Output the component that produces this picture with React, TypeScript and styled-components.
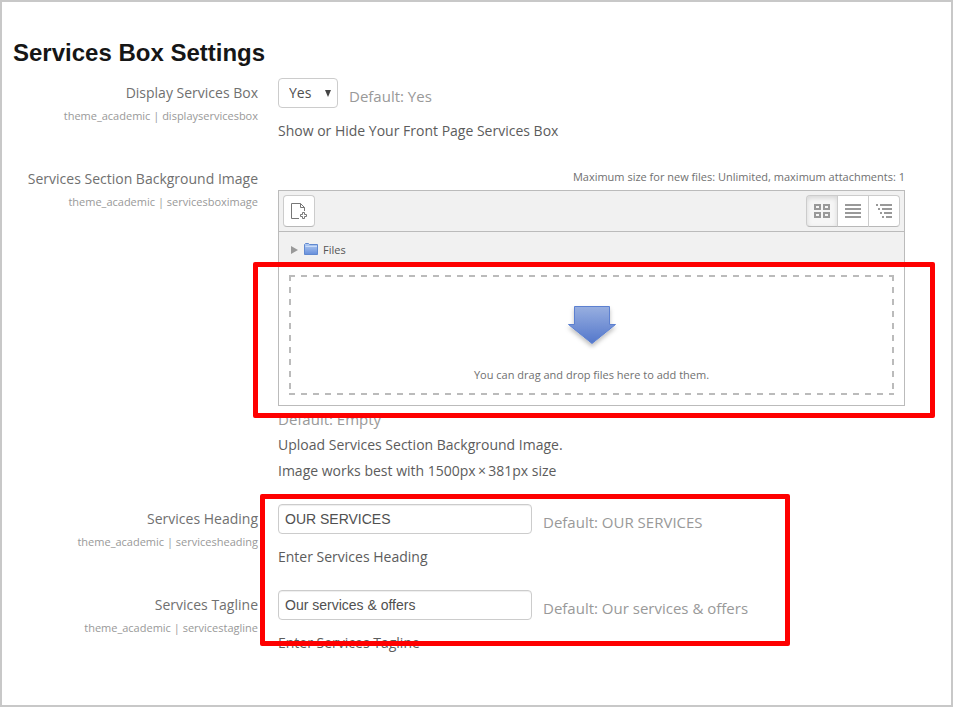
import React from "react";
import styled, { createGlobalStyle, css } from "styled-components";

const GlobalStyle = createGlobalStyle`
  *, *::before, *::after { box-sizing: border-box; }
  body {
    margin: 0;
    background: #fff;
    color: #5c5c5c;
    font-family: "Open Sans", sans-serif;
    font-size: 14px;
    line-height: 26px;
  }
`;

const Page = styled.main`
  min-height: 100vh;
  padding: 34px 46px 20px 11px;
  border: 2px solid #c8c8c8;
`;

const Title = styled.h1`
  margin: 0 0 8px;
  color: #161616;
  font: bold 24px/34px "Liberation Sans", Arial, sans-serif;
`;

const Row = styled.div`
  display: grid;
  grid-template-columns: 245px minmax(0, 1fr);
  column-gap: 20px;
  margin-bottom: 20px;
`;

const LabelCell = styled.div`
  padding-top: 2px;
  text-align: right;
  color: #707070;
`;

const Label = styled.label`
  display: block;
`;

const SettingName = styled.span`
  display: block;
  color: #999;
  font-size: 11px;
  line-height: 20px;
`;

const ControlLine = styled.div`
  display: flex;
  gap: 11px;
  height: 30px;
  margin-bottom: 10px;
`;

const DefaultValue = styled.span<{ $beside?: boolean }>`
  display: block;
  color: #999;
  font-size: 15px;
  ${(p) => p.$beside && css`padding-top: 5px;`}
`;

const Help = styled.p`
  margin: 0;
`;

const SelectBox = styled.span`
  position: relative;
  width: 60px;
  svg {
    position: absolute;
    top: 12px;
    right: 6px;
    pointer-events: none;
  }
`;

const Select = styled.select`
  width: 100%;
  height: 30px;
  padding: 0 10px 2px;
  appearance: none;
  border: 1px solid #ccc;
  border-radius: 4px;
  background: #fff;
  color: #505050;
  font: 14px "Open Sans", sans-serif;
`;

const TextInput = styled.input`
  width: 254px;
  height: 30px;
  padding: 0 6px;
  border: 1px solid #ccc;
  border-radius: 4px;
  box-shadow: inset 0 1px 1px rgba(0, 0, 0, 0.07);
  color: #505050;
  font: 14px "Liberation Sans", Arial, sans-serif;
`;

const Limits = styled.p`
  margin: 0;
  text-align: right;
  color: #707070;
  font-size: 11px;
`;

const Highlighted = styled.div`
  position: relative;
`;

const Highlight = styled.div<{ $area: "drop" | "text" }>`
  position: absolute;
  z-index: 1;
  border: 5px solid #fe0000;
  border-radius: 2px;
  pointer-events: none;
  ${(p) =>
    p.$area === "drop"
      ? css`top: 72px; right: -30px; bottom: -12px; left: -25px;`
      : css`top: -10px; bottom: 10px; left: 247px; width: 530px;`}
`;

const FileManager = styled.section`
  border: 1px solid #bbb;
`;

const Toolbar = styled.div`
  display: flex;
  justify-content: space-between;
  padding: 4px;
  border-bottom: 1px solid #bbb;
  background: #f1f1f1;
`;

const ToolButton = styled.button<{ $active?: boolean }>`
  display: flex;
  align-items: center;
  justify-content: center;
  width: 32px;
  height: 32px;
  padding: 0;
  border: 1px solid #ccc;
  border-bottom-color: #b8b8b8;
  border-radius: 4px;
  background: #fff;
  ${(p) => p.$active && css`
    background: #f6f6f6;
    box-shadow: inset 0 2px 5px rgba(0, 0, 0, 0.13);
  `}
`;

const ViewButtons = styled.div`
  display: flex;
  ${ToolButton} + ${ToolButton} { margin-left: -1px; }
  ${ToolButton}:not(:last-child) { border-top-right-radius: 0; border-bottom-right-radius: 0; }
  ${ToolButton}:not(:first-child) { border-top-left-radius: 0; border-bottom-left-radius: 0; }
`;

const PathBar = styled.nav`
  display: flex;
  align-items: center;
  gap: 5px;
  height: 33px;
  padding: 2px 12px 0;
  background: #f1f1f1;
`;

const FolderLink = styled.a`
  display: flex;
  align-items: center;
  gap: 4px;
  color: #555;
  font-size: 11px;
  line-height: 20px;
  text-decoration: none;
`;

const DropArea = styled.div`
  --h: repeating-linear-gradient(90deg, #bbb 0 6px, transparent 6px 12px);
  --v: repeating-linear-gradient(180deg, #bbb 0 6px, transparent 6px 12px);
  display: flex;
  flex-direction: column;
  align-items: center;
  height: 120px;
  margin: 10px;
  padding-top: 27px;
  background:
    var(--h) top / 100% 2px no-repeat,
    var(--h) bottom / 100% 2px no-repeat,
    var(--v) left / 2px 100% no-repeat,
    var(--v) right / 2px 100% no-repeat;
  color: #707070;
  font-size: 11px;
  line-height: 20px;
`;

const DropText = styled.p`
  margin: 15px 0 0;
`;

function AddFileIcon() {
  return (
    <svg width="18" height="18" viewBox="0 0 18 18" fill="none" stroke="#777" aria-hidden="true">
      <path d="M9 16.5H1.5V1.5H10.500L14.500 5.500V9" />
      <path d="M10.500 1.500V5.500H14.500" />
      <path d="M12.500 10.500H14.500V12.500H16.500V14.500H14.500V16.500H12.500V14.500H10.500V12.500H12.500Z" fill="#fff" />
    </svg>
  );
}

function GridIcon() {
  return (
    <svg width="16" height="14" viewBox="0 0 16 14" fill="none" stroke="#999" strokeWidth="2" aria-hidden="true">
      <path d="M1 1H6V5H1ZM10 1H15V5H10ZM1 9H6V13H1ZM10 9H15V13H10Z" />
    </svg>
  );
}

function ListIcon() {
  return (
    <svg width="16" height="14" viewBox="0 0 16 14" stroke="#999" strokeWidth="2" aria-hidden="true">
      <path d="M0 1H16M0 5H16M0 9H16M0 13H16" />
    </svg>
  );
}

function TreeIcon() {
  return (
    <svg width="16" height="14" viewBox="0 0 16 14" stroke="#999" strokeWidth="2" aria-hidden="true">
      <path d="M0 1H2M4 1H16M2 5H4M6 5H16M4 9H6M8 9H16M6 13H8M10 13H16" />
    </svg>
  );
}

function FolderIcon() {
  return (
    <svg width="15" height="13" viewBox="0 0 15 13" aria-hidden="true">
      <defs>
        <linearGradient id="folder" x2="0" y2="1">
          <stop stopColor="#b4cdf3" />
          <stop offset="1" stopColor="#668edb" />
        </linearGradient>
      </defs>
      <path d="M.5 1.500L1.500 .5H4.500L5.500 1.500H13.500V11.500H.5Z" fill="url(#folder)" stroke="#6189d0" />
      <path d="M1.500 3.500H13" stroke="#c8dbf8" />
    </svg>
  );
}

function DropArrow() {
  return (
    <svg width="56" height="48" viewBox="0 0 56 48" aria-hidden="true">
      <defs>
        <linearGradient id="arrow" x2="0" y2="1">
          <stop stopColor="#98afe0" />
          <stop offset="1" stopColor="#5377cb" />
        </linearGradient>
        <filter id="shadow" x="-20%" y="-20%" width="140%" height="150%">
          <feDropShadow dx="0" dy="3" stdDeviation="2" floodOpacity=".25" />
        </filter>
      </defs>
      <path
        d="M10.500 4.500H45.500V22.500H51.500L28 41.500L4.500 22.500H10.500Z"
        fill="url(#arrow)"
        stroke="#5c80d0"
        filter="url(#shadow)"
      />
    </svg>
  );
}

interface SettingProps {
  id: string;
  label: string;
  name: string;
  children: React.ReactNode;
}

function Setting({ id, label, name, children }: SettingProps) {
  return (
    <Row>
      <LabelCell>
        <Label htmlFor={id}>{label}</Label>
        <SettingName>theme_academic | {name}</SettingName>
      </LabelCell>
      <div>{children}</div>
    </Row>
  );
}

export default function App() {
  return (
    <>
      <GlobalStyle />
      <Page>
        <Title>Services Box Settings</Title>

        <Setting id="display" label="Display Services Box" name="displayservicesbox">
          <ControlLine>
            <SelectBox>
              <Select id="display" defaultValue="Yes">
                <option>Yes</option>
                <option>No</option>
              </Select>
              <svg width="8" height="7" viewBox="0 0 8 7" aria-hidden="true">
                <path d="M1 0H7L4 7Z" fill="#444" />
              </svg>
            </SelectBox>
            <DefaultValue $beside>Default: Yes</DefaultValue>
          </ControlLine>
          <Help>Show or Hide Your Front Page Services Box</Help>
        </Setting>

        <Setting id="add-file" label="Services Section Background Image" name="servicesboximage">
          <Limits>Maximum size for new files: Unlimited, maximum attachments: 1</Limits>
          <Highlighted>
            <FileManager>
              <Toolbar>
                <ToolButton id="add-file" type="button" title="Add file"><AddFileIcon /></ToolButton>
                <ViewButtons>
                  <ToolButton type="button" title="Icons" $active><GridIcon /></ToolButton>
                  <ToolButton type="button" title="List"><ListIcon /></ToolButton>
                  <ToolButton type="button" title="Tree"><TreeIcon /></ToolButton>
                </ViewButtons>
              </Toolbar>
              <PathBar>
                <svg width="8" height="8" viewBox="0 0 8 8" aria-hidden="true">
                  <path d="M0 0L7 4L0 8Z" fill="#999" />
                </svg>
                <FolderLink href="#files"><FolderIcon />Files</FolderLink>
              </PathBar>
              <DropArea>
                <DropArrow />
                <DropText>You can drag and drop files here to add them.</DropText>
              </DropArea>
            </FileManager>
            <Highlight $area="drop" />
          </Highlighted>
          <DefaultValue>Default: Empty</DefaultValue>
          <Help>Upload Services Section Background Image.</Help>
          <Help>Image works best with 1500px&thinsp;×&thinsp;381px size</Help>
        </Setting>

        <Highlighted>
          <Setting id="heading" label="Services Heading" name="servicesheading">
            <ControlLine>
              <TextInput id="heading" type="text" defaultValue="OUR SERVICES" />
              <DefaultValue $beside>Default: OUR SERVICES</DefaultValue>
            </ControlLine>
            <Help>Enter Services Heading</Help>
          </Setting>
          <Setting id="tagline" label="Services Tagline" name="servicestagline">
            <ControlLine>
              <TextInput id="tagline" type="text" defaultValue="Our services &amp; offers" />
              <DefaultValue $beside>Default: Our services &amp; offers</DefaultValue>
            </ControlLine>
            <Help>Enter Services Tagline</Help>
          </Setting>
          <Highlight $area="text" />
        </Highlighted>
      </Page>
    </>
  );
}
